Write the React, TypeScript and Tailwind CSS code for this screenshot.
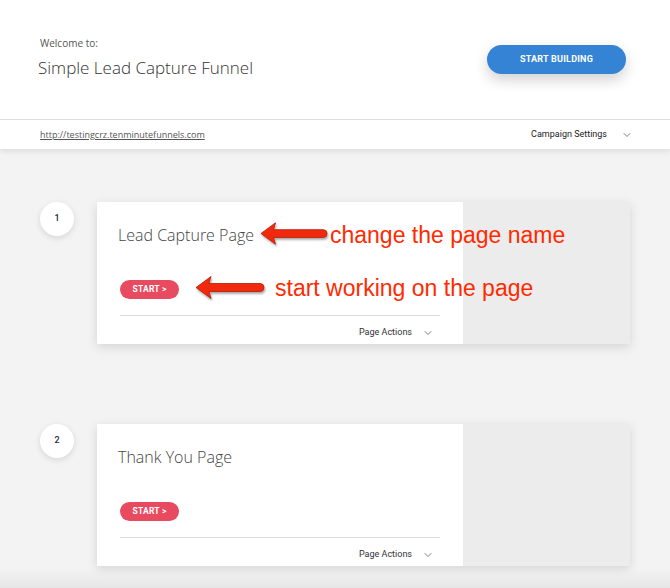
import { ChevronDown } from "lucide-react"

const Arrow = ({ className }: { className?: string }) => (
  <svg className={className} viewBox="0 0 72 26" fill="none">
    <defs>
      <filter id="ash" x="-10%" y="-30%" width="130%" height="170%">
        <feDropShadow dx="1" dy="2" stdDeviation="1.2" floodColor="#000" floodOpacity="0.35" />
      </filter>
    </defs>
    <path
      d="M2 12.5 L17 1.5 L15 8.5 L66 8.5 Q70 8.5 70 12.5 Q70 16.5 66 16.5 L15 16.5 L17 23.5 Z"
      fill="#f22c10"
      stroke="#b31a05"
      strokeWidth={0.8}
      strokeLinejoin="round"
      filter="url(#ash)"
    />
  </svg>
)

const sans = { fontFamily: "'Open Sans', sans-serif" }

function FunnelStep({ num, title, notes }: { num: number; title: string; notes?: boolean }) {
  return (
    <div className="flex items-start pl-10">
      <div className="w-[34px] h-[34px] rounded-full bg-white shadow-[0_2px_6px_rgba(0,0,0,0.12)] flex items-center justify-center text-[9px] font-medium text-gray-800 font-['Roboto',sans-serif]">
        {num}
      </div>
      <div className="relative ml-[23px] flex w-[533px] h-[142px] shadow-[0_3px_10px_rgba(0,0,0,0.13)]">
        <div className="w-[366px] bg-white pl-[21px] pr-[23px] flex flex-col">
          <div className="shrink-0 pt-[21px] h-[66px] text-[16px] font-light text-[#444]" style={sans}>
            {title}
          </div>
          <div className="shrink-0 flex pl-[2px] pt-[12px]">
            <button className="w-[59px] h-[19px] rounded-full bg-[#e84a5f] text-white text-[8.5px] font-bold tracking-wide font-['Roboto',sans-serif]">
              START &gt;
            </button>
          </div>
          <div className="shrink-0 mt-[16px] ml-[2px] border-t border-[#dcdcdc]" />
          <div className="shrink-0 flex justify-end items-center pt-[10px] pr-[6px] gap-[10px] text-[9px] text-[#333] font-['Roboto',sans-serif]">
            <span>Page Actions</span>
            <ChevronDown className="w-[12px] h-[12px] text-[#555]" strokeWidth={1.5} />
          </div>
        </div>
        <div className="flex-1 bg-[#ececec]" />
        {notes && (
          <>
            <Arrow className="absolute left-[162px] top-[19px] w-[70px] h-[26px]" />
            <div className="absolute left-[233px] top-[18px] text-[23px] leading-[30px] text-[#ff2a00] whitespace-nowrap font-['Liberation_Sans',Arial,sans-serif]">
              change the page name
            </div>
            <Arrow className="absolute left-[94px] top-[73px] w-[78px] h-[26px]" />
            <div className="absolute left-[178px] top-[71px] text-[23px] leading-[30px] text-[#ff2a00] whitespace-nowrap font-['Liberation_Sans',Arial,sans-serif]">
              start working on the page
            </div>
          </>
        )}
      </div>
    </div>
  )
}

export default function App() {
  return (
    <div className="w-[670px] h-[588px] overflow-hidden bg-[#f3f3f3] relative">
      {/* Header */}
      <div className="relative z-10 bg-white shadow-[0_2px_6px_rgba(0,0,0,0.1)]">
        <div className="h-[120px] flex items-start justify-between pl-[38px] pr-[44px] border-b border-[#dedede]">
          <div className="pt-[36px]" style={sans}>
            <div className="pl-[2px] text-[10px] text-[#555]">Welcome to:</div>
            <div className="mt-[4px] text-[17px] font-light text-[#333]">Simple Lead Capture Funnel</div>
          </div>
          <button className="mt-[45px] w-[139px] h-[29px] rounded-full bg-[#3483d4] text-white text-[9px] font-bold tracking-wide shadow-[0_6px_14px_rgba(0,0,0,0.18)] font-['Roboto',sans-serif]">
            START BUILDING
          </button>
        </div>
        <div className="h-[29px] flex items-center justify-between pl-10 pr-[37px]">
          <a className="text-[9px] text-[#555] underline" style={sans}>
            http://testingcrz.tenminutefunnels.com
          </a>
          <div className="flex items-center gap-[14px] text-[9px] text-[#222] font-['Roboto',sans-serif]">
            <span>Campaign Settings</span>
            <ChevronDown className="w-[12px] h-[12px] text-[#555]" strokeWidth={1.5} />
          </div>
        </div>
      </div>

      {/* Steps */}
      <div className="pt-[53px] flex flex-col gap-[80px]">
        <FunnelStep num={1} title="Lead Capture Page" notes />
        <FunnelStep num={2} title="Thank You Page" />
      </div>

      <div className="absolute left-0 right-0 bottom-0 h-[20px] bg-gradient-to-b from-transparent to-[#e6e6e6]" />
    </div>
  )
}
